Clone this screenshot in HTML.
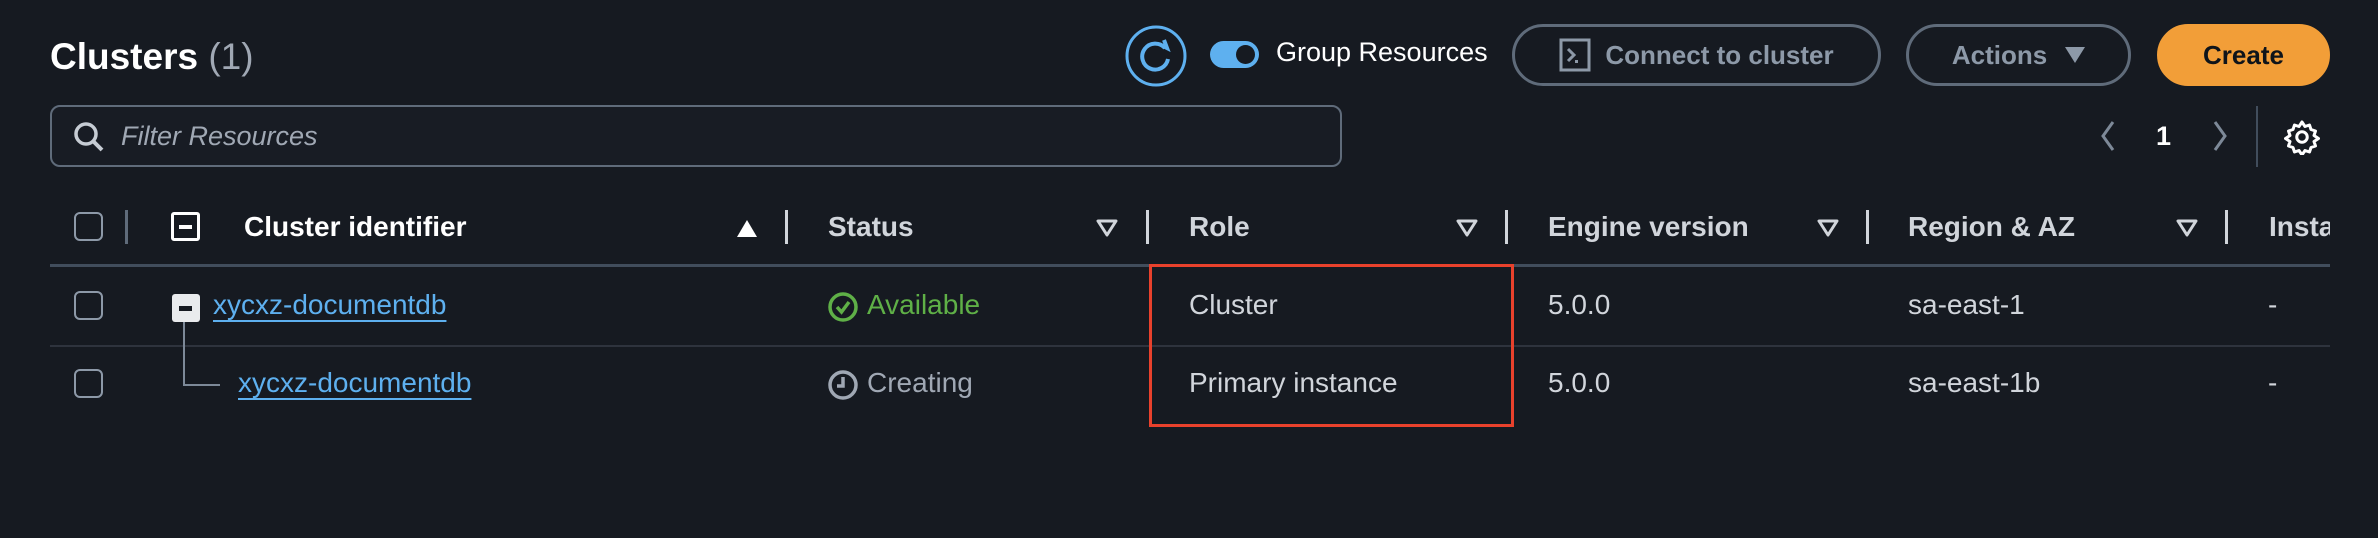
<!DOCTYPE html>
<html><head><meta charset="utf-8"><style>
*{box-sizing:border-box;margin:0;padding:0}
body{width:2378px;height:538px;background:#161a21;font-family:"Liberation Sans",sans-serif;color:#d1d5db;position:relative;overflow:hidden}
.a{position:absolute;white-space:nowrap}
.h{font-weight:bold;font-size:28px;color:#d1d5db;top:211px}
.hw{color:#fff}
.div{position:absolute;width:3px;height:34px;top:210px;background:#d1d5db}
.tri{position:absolute;top:220px;width:0;height:0}
.cb{position:absolute;width:29px;height:29px;border:2px solid #8d99a8;border-radius:6px;left:74px}
.t{font-size:28px;color:#d1d5db}
.lnk{color:#5eb0ef;text-decoration:underline;text-underline-offset:6px;text-decoration-thickness:2px;font-size:28px}
.btn{position:absolute;top:24px;height:62px;border:3px solid #5f6b7a;border-radius:31px;font-weight:bold;font-size:26px;color:#8d99a8;display:flex;align-items:center;justify-content:center}
</style></head><body>
<div class="a" style="left:50px;top:36px;font-size:37px;font-weight:bold;color:#fff">Clusters <span style="font-weight:normal;color:#a0a8b4">(1)</span></div>

<svg class="a" style="left:1124px;top:24px" width="64" height="64" viewBox="0 0 64 64"><circle cx="32" cy="32" r="29" fill="none" stroke="#5eb0ef" stroke-width="3"/><path d="M41 24 A13 13 0 1 0 44 35" fill="none" stroke="#5eb0ef" stroke-width="4"/><path d="M35 20 L43 24 L40 16" fill="none" stroke="#5eb0ef" stroke-width="4"/></svg>
<div class="a" style="left:1210px;top:41px;width:49px;height:27px;border-radius:14px;background:#5eb0ef"></div>
<div class="a" style="left:1236px;top:45px;width:19px;height:19px;border-radius:50%;background:#161a21"></div>
<div class="a" style="left:1276px;top:37px;font-size:27px;color:#fff">Group Resources</div>

<div class="btn" style="left:1512px;width:369px"><svg width="32" height="34" viewBox="0 0 32 34" style="margin-right:14px"><rect x="2" y="2" width="28" height="30" fill="none" stroke="#8d99a8" stroke-width="3"/><path d="M9 11 L15 17 L9 23" fill="none" stroke="#8d99a8" stroke-width="3"/><rect x="16" y="22" width="3" height="3" fill="#8d99a8"/></svg>Connect to cluster</div>
<div class="btn" style="left:1906px;width:225px">Actions<span style="display:inline-block;margin-left:18px;width:0;height:0;border-left:10px solid transparent;border-right:10px solid transparent;border-top:16px solid #8d99a8"></span></div>
<div class="btn" style="left:2157px;width:173px;background:#f29e38;border-color:#f29e38;color:#0f141a">Create</div>

<div class="a" style="left:50px;top:105px;width:1292px;height:62px;border:2px solid #5f6b7a;border-radius:10px;background:#181c24"></div>
<svg class="a" style="left:72px;top:120px" width="34" height="34" viewBox="0 0 34 34"><circle cx="14" cy="14" r="10" fill="none" stroke="#c6ccd4" stroke-width="3.5"/><path d="M21 21 L30 30" stroke="#c6ccd4" stroke-width="4"/></svg>
<div class="a" style="left:121px;top:121px;font-size:27px;font-style:italic;color:#a0a8b4">Filter Resources</div>

<svg class="a" style="left:2098px;top:120px" width="20" height="32"><path d="M15 2 L5 16 L15 30" fill="none" stroke="#7d8998" stroke-width="3"/></svg>
<div class="a" style="left:2156px;top:121px;font-size:27px;font-weight:bold;color:#fff">1</div>
<svg class="a" style="left:2210px;top:120px" width="20" height="32"><path d="M5 2 L15 16 L5 30" fill="none" stroke="#7d8998" stroke-width="3"/></svg>
<div class="a" style="left:2256px;top:106px;width:2px;height:61px;background:#414d5c"></div>
<svg class="a" style="left:2284px;top:119px" width="36" height="36" viewBox="0 0 24 24"><path d="M12 2 l2 3 3-1 1 3 3 1-1 3 3 2-3 2 1 3-3 1-1 3-3-1-2 3-2-3-3 1-1-3-3-1 1-3-3-2 3-2-1-3 3-1 1-3 3 1z" fill="none" stroke="#fff" stroke-width="2" stroke-linejoin="round"/><circle cx="12" cy="12" r="3.5" fill="none" stroke="#fff" stroke-width="2"/></svg>

<!-- header -->
<div class="cb" style="top:212px"></div>
<div class="div" style="left:125px;background:#5f6b7a"></div>
<div class="a" style="left:171px;top:212px;width:29px;height:29px;border:3px solid #fff;border-radius:3px"></div>
<div class="a" style="left:179px;top:225px;width:13px;height:4px;background:#fff"></div>
<div class="a h hw" style="left:244px">Cluster identifier</div>
<div class="tri" style="left:737px;border-left:10px solid transparent;border-right:10px solid transparent;border-bottom:17px solid #fff"></div>
<div class="div" style="left:785px"></div>
<div class="a h" style="left:828px">Status</div>
<svg class="a" style="left:1096px;top:219px" width="22" height="18"><path d="M2 2 H20 L11 16 Z" fill="none" stroke="#d1d5db" stroke-width="3" stroke-linejoin="round"/></svg>
<div class="div" style="left:1146px"></div>
<div class="a h" style="left:1189px">Role</div>
<svg class="a" style="left:1456px;top:219px" width="22" height="18"><path d="M2 2 H20 L11 16 Z" fill="none" stroke="#d1d5db" stroke-width="3" stroke-linejoin="round"/></svg>
<div class="div" style="left:1505px"></div>
<div class="a h" style="left:1548px">Engine version</div>
<svg class="a" style="left:1817px;top:219px" width="22" height="18"><path d="M2 2 H20 L11 16 Z" fill="none" stroke="#d1d5db" stroke-width="3" stroke-linejoin="round"/></svg>
<div class="div" style="left:1866px"></div>
<div class="a h" style="left:1908px">Region &amp; AZ</div>
<svg class="a" style="left:2176px;top:219px" width="22" height="18"><path d="M2 2 H20 L11 16 Z" fill="none" stroke="#d1d5db" stroke-width="3" stroke-linejoin="round"/></svg>
<div class="div" style="left:2225px"></div>
<div class="a h" style="left:2269px">Insta</div>
<div class="a" style="left:2330px;top:200px;width:48px;height:70px;background:#161a21"></div>
<div class="a" style="left:50px;top:264px;width:2280px;height:3px;background:#414d5c"></div>

<!-- row 1 -->
<div class="cb" style="top:291px"></div>
<div class="a" style="left:172px;top:294px;width:28px;height:28px;background:#e9ebed;border-radius:3px"></div>
<div class="a" style="left:179px;top:306px;width:13px;height:5px;background:#161a21"></div>
<div class="a lnk" style="left:213px;top:289px">xycxz-documentdb</div>
<svg class="a" style="left:827px;top:291px" width="32" height="32" viewBox="0 0 32 32"><circle cx="16" cy="16" r="13" fill="none" stroke="#5fb047" stroke-width="3.5"/><path d="M10 16 L14.5 21 L22 11" fill="none" stroke="#5fb047" stroke-width="3.5"/></svg>
<div class="a t" style="left:867px;top:289px;color:#5fb047">Available</div>
<div class="a t" style="left:1189px;top:289px">Cluster</div>
<div class="a t" style="left:1548px;top:289px">5.0.0</div>
<div class="a t" style="left:1908px;top:289px">sa-east-1</div>
<div class="a t" style="left:2268px;top:289px">-</div>
<div class="a" style="left:50px;top:345px;width:2280px;height:2px;background:#2e333d"></div>

<!-- row 2 -->
<div class="a" style="left:183px;top:322px;width:2px;height:63px;background:#7d8998"></div>
<div class="a" style="left:183px;top:384px;width:37px;height:2px;background:#7d8998"></div>
<div class="cb" style="top:369px"></div>
<div class="a lnk" style="left:238px;top:367px">xycxz-documentdb</div>
<svg class="a" style="left:827px;top:369px" width="32" height="32" viewBox="0 0 32 32"><circle cx="16" cy="16" r="13" fill="none" stroke="#a0a8b4" stroke-width="3.5"/><path d="M16 8 V17 H10" fill="none" stroke="#a0a8b4" stroke-width="3.5"/></svg>
<div class="a t" style="left:867px;top:367px;color:#a0a8b4">Creating</div>
<div class="a t" style="left:1189px;top:367px">Primary instance</div>
<div class="a t" style="left:1548px;top:367px">5.0.0</div>
<div class="a t" style="left:1908px;top:367px">sa-east-1b</div>
<div class="a t" style="left:2268px;top:367px">-</div>

<div class="a" style="left:1149px;top:264px;width:365px;height:163px;border:3px solid #e8412c"></div>
</body></html>
